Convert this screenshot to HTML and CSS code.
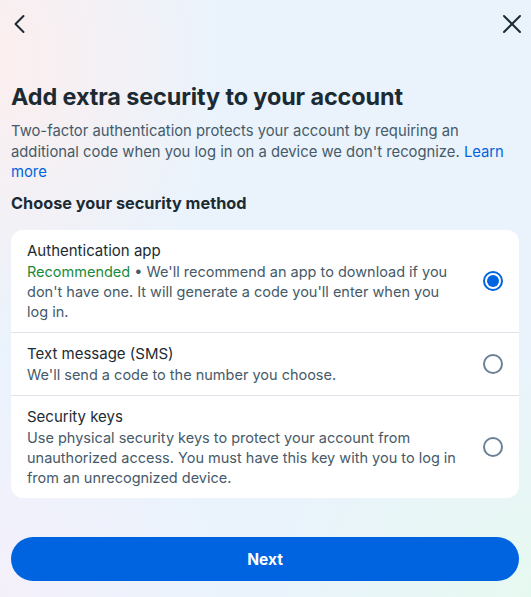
FILE: index.html
```html
<!DOCTYPE html>
<html lang="en">
<head>
<meta charset="utf-8">
<title>Two-factor authentication</title>
<link rel="stylesheet" href="styles.css">
</head>
<body>
<div class="page">
  <header class="topbar">
    <button class="icon-btn" aria-label="Back">
      <svg width="24" height="24" viewBox="0 0 24 24"><path d="M16.5 4 L8.5 12 L16.5 20" fill="none" stroke="#1c2b33" stroke-width="2" stroke-linecap="round" stroke-linejoin="round"/></svg>
    </button>
    <button class="icon-btn" aria-label="Close">
      <svg width="24" height="24" viewBox="0 0 24 24"><path d="M4 4 L20 20 M20 4 L4 20" fill="none" stroke="#1c2b33" stroke-width="2" stroke-linecap="round"/></svg>
    </button>
  </header>

  <main class="content">
    <h1 class="title">Add extra security to your account</h1>
    <p class="intro">Two-factor authentication protects your account by requiring an additional code when you log in on a device we don't recognize. <a class="link" href="#">Learn more</a></p>
    <h2 class="subtitle">Choose your security method</h2>

    <div class="card">
      <label class="option">
        <div class="option-text">
          <div class="option-title">Authentication app</div>
          <div class="option-desc"><span class="recommended">Recommended</span> • We'll recommend an app to download if you don't have one. It will generate a code you'll enter when you log&nbsp;in.</div>
        </div>
        <span class="radio radio-on"></span>
      </label>
      <label class="option">
        <div class="option-text">
          <div class="option-title">Text message (SMS)</div>
          <div class="option-desc">We'll send a code to the number you choose.</div>
        </div>
        <span class="radio"></span>
      </label>
      <label class="option">
        <div class="option-text">
          <div class="option-title">Security keys</div>
          <div class="option-desc">Use physical security keys to protect your account from unauthorized access. You must have this key with you to log in from an unrecognized device.</div>
        </div>
        <span class="radio"></span>
      </label>
    </div>
  </main>

  <footer class="footer">
    <button class="next-btn">Next</button>
  </footer>
</div>
</body>
</html>
```

FILE: styles.css
```css
* { box-sizing: border-box; }

html, body {
  margin: 0;
  padding: 0;
  height: 100%;
}

body {
  font-family: "Inter", "Noto Sans", sans-serif;
  color: #1c2b33;
  background:
    radial-gradient(ellipse 60% 70% at 0% 10%, rgba(253, 238, 238, 0.95), rgba(253, 238, 238, 0) 70%),
    radial-gradient(ellipse 70% 60% at 100% 100%, rgba(230, 249, 240, 1), rgba(230, 249, 240, 0) 70%),
    radial-gradient(ellipse 60% 60% at 0% 100%, rgba(244, 240, 250, 1), rgba(244, 240, 250, 0) 70%),
    #eaf3fc;
}

.page {
  width: 531px;
  height: 597px;
  display: flex;
  flex-direction: column;
}

.topbar {
  display: flex;
  justify-content: space-between;
  align-items: center;
  padding: 8px 7px 0 7px;
  height: 40px;
}

.icon-btn {
  width: 24px;
  height: 24px;
  padding: 0;
  border: 0;
  background: none;
  display: flex;
  align-items: center;
  justify-content: center;
}

.content {
  padding: 43px 12px 0 11px;
}

.title {
  margin: 0;
  font-size: 23.4px;
  line-height: 28px;
  font-weight: 700;
  color: #1c2b33;
  letter-spacing: -0.1px;
}

.intro {
  margin: 10px 0 0;
  font-size: 14.8px;
  line-height: 20.5px;
  color: #465a69;
}

.link {
  color: #0064e0;
  text-decoration: none;
}

.subtitle {
  margin: 10px 0 0;
  font-size: 16.3px;
  line-height: 20px;
  font-weight: 700;
  color: #1c2b33;
}

.card {
  margin-top: 17px;
  background: #ffffff;
  border-radius: 12px;
  overflow: hidden;
}

.option {
  display: flex;
  align-items: center;
  gap: 16px;
  padding: 11px 16px 10px 16px;
  border-top: 1px solid #dde3e8;
}

.option:first-child {
  border-top: 0;
}

.option-text {
  flex: 1;
}

.option-title {
  font-size: 15px;
  line-height: 20px;
  color: #1c2b33;
}

.option-desc {
  margin-top: 1px;
  font-size: 14.5px;
  line-height: 20px;
  color: #465a69;
}

.recommended {
  color: #198a3b;
}

.radio {
  flex: 0 0 20px;
  width: 20px;
  height: 20px;
  border-radius: 50%;
  border: 2px solid #6a8196;
  position: relative;
}

.radio-on {
  border-color: #0064e0;
}

.radio-on::after {
  content: "";
  position: absolute;
  left: 2px;
  top: 2px;
  width: 12px;
  height: 12px;
  border-radius: 50%;
  background: #0064e0;
}

.footer {
  margin-top: auto;
  padding: 0 12px 16px 11px;
}

.next-btn {
  width: 100%;
  height: 44px;
  border: 0;
  border-radius: 22px;
  background: #0064e0;
  color: #ffffff;
  font-family: "Inter", "Noto Sans", sans-serif;
  font-size: 15.5px;
  font-weight: 700;
}
```
